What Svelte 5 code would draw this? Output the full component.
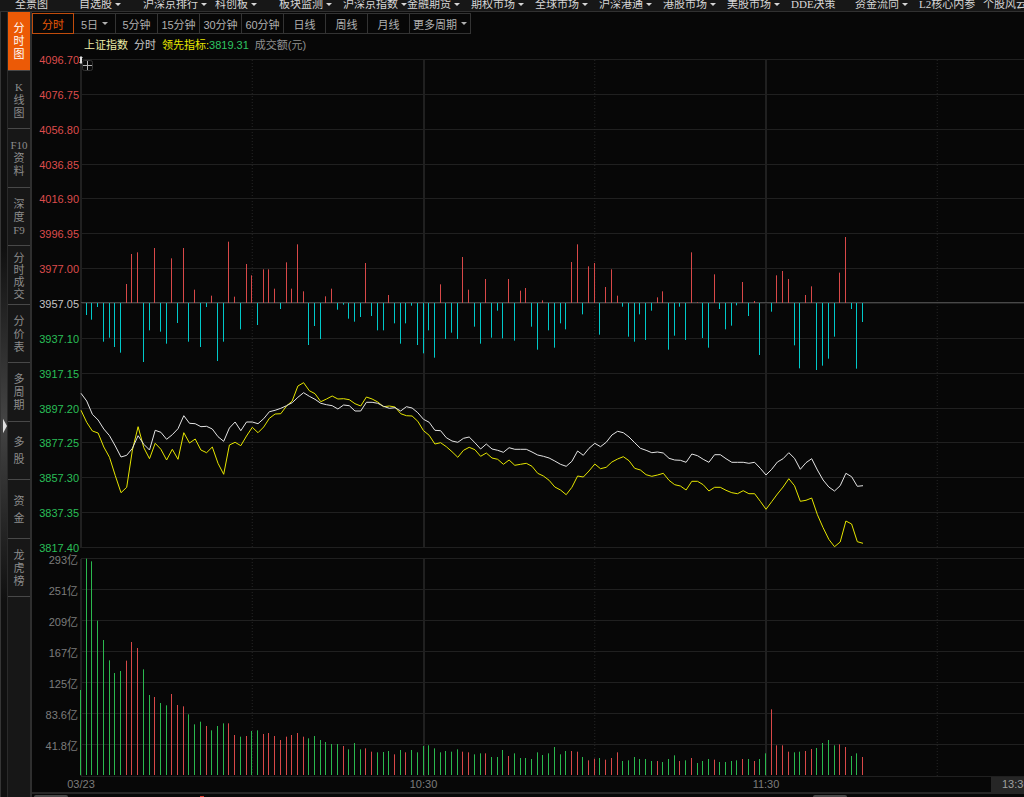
<script>
  const menu = [
    { label: '全景图' },
    { label: '自选股', more: true },
    { label: '沪深京排行', more: true, wide: true },
    { label: '科创板', more: true },
    { label: '板块监测', more: true },
    { label: '沪深京指数', more: true },
    { label: '金融期货', more: true },
    { label: '期权市场', more: true },
    { label: '全球市场', more: true },
    { label: '沪深港通', more: true },
    { label: '港股市场', more: true },
    { label: '美股市场', more: true },
    { label: 'DDE决策' },
    { label: '资金流向', more: true },
    { label: 'L2核心内参' },
    { label: '个股风云' }
  ];

  const views = [
    ['分', '时', '图'],
    ['K', '线', '图'],
    ['F10', '资', '料'],
    ['深', '度', 'F9'],
    ['分', '时', '成', '交'],
    ['分', '价', '表'],
    ['多', '周', '期'],
    ['多', '股'],
    ['资', '金'],
    ['龙', '虎', '榜']
  ];

  const periods = [
    { label: '分时' },
    { label: '5日', more: true },
    { label: '5分钟' },
    { label: '15分钟' },
    { label: '30分钟' },
    { label: '60分钟' },
    { label: '日线' },
    { label: '周线' },
    { label: '月线' },
    { label: '更多周期', more: true, wide: true }
  ];

  let activeView = $state(0);
  let activePeriod = $state(0);

  const prices = [
    '4096.70', '4076.75', '4056.80', '4036.85', '4016.90', '3996.95', '3977.00', '3957.05',
    '3937.10', '3917.15', '3897.20', '3877.25', '3857.30', '3837.35', '3817.40'
  ];
  const volumes = ['293亿', '251亿', '209亿', '167亿', '125亿', '83.6亿', '41.8亿'];

  // One value per minute, in thirds of a pixel below DATA_TOP
  const indexLine = [
    490, 513, 553, 570, 597, 617, 648, 681, 676, 655, 617, 643, 660, 601, 607, 628, 614, 596, 557, 580,
    581, 590, 589, 597, 620, 634, 594, 576, 602, 576, 576, 581, 566, 545, 541, 535, 527, 518, 502, 488,
    499, 508, 520, 524, 527, 537, 525, 527, 543, 543, 517, 517, 520, 529, 535, 533, 543, 530, 534, 548,
    568, 577, 601, 602, 623, 633, 637, 625, 621, 638, 657, 642, 657, 661, 667, 653, 658, 658, 658, 666,
    675, 679, 684, 693, 703, 709, 694, 663, 676, 655, 640, 650, 637, 615, 604, 608, 621, 638, 655, 661,
    668, 666, 669, 685, 690, 691, 697, 672, 677, 688, 697, 674, 674, 686, 697, 697, 697, 700, 697, 715,
    735, 718, 696, 686, 668, 685, 718, 698, 686, 720, 750, 771, 783, 767, 730, 740, 769, 767
  ];
  const leadLine = [
    541, 577, 603, 609, 651, 682, 737, 788, 772, 660, 590, 653, 686, 640, 658, 690, 658, 688, 608, 639,
    627, 660, 668, 651, 700, 733, 645, 637, 647, 618, 592, 608, 591, 565, 552, 551, 528, 513, 468, 458,
    482, 491, 515, 507, 498, 507, 506, 509, 521, 528, 501, 507, 516, 530, 528, 531, 551, 557, 558, 574,
    602, 616, 642, 638, 650, 665, 682, 661, 652, 659, 679, 669, 684, 688, 703, 690, 706, 703, 700, 709,
    730, 738, 751, 771, 780, 794, 772, 738, 741, 723, 702, 716, 712, 696, 687, 680, 692, 715, 720, 734,
    739, 735, 730, 751, 764, 768, 780, 754, 754, 764, 783, 772, 772, 781, 788, 791, 782, 791, 791, 814,
    838, 815, 792, 771, 746, 767, 814, 811, 804, 854, 893, 928, 950, 936, 873, 882, 935, 940
  ];
  const strength = [
    219, 255, 269, 231, 335, 323, 351, 368, 162, 72, 67, 396, 301, 54, 305, 341, 85, 279, 54, 335,
    179, 351, 231, 197, 393, 335, 35, 200, 298, 102, 136, 285, 118, 118, 176, 237, 97, 176, 43, 184,
    345, 288, 327, 199, 176, 239, 224, 266, 275, 261, 99, 258, 301, 301, 195, 280, 341, 280, 227, 345,
    370, 301, 383, 163, 327, 308, 327, 81, 179, 290, 341, 147, 323, 242, 325, 147, 332, 182, 174, 290,
    359, 211, 301, 353, 280, 298, 96, 43, 253, 109, 99, 314, 171, 118, 197, 230, 320, 335, 253, 330,
    242, 202, 184, 359, 317, 230, 330, 67, 217, 324, 353, 133, 237, 298, 287, 226, 156, 258, 213, 375,
    219, 245, 136, 123, 147, 346, 415, 195, 169, 420, 407, 386, 320, 128, 21, 237, 416, 276
  ];
  // Bar heights in thirds of a pixel, negative for a falling minute
  const turnover = [
    -255, -649, -641, -463, -405, -344, -306, -312, 343, 399, 381, -317, -240, 234, -216, -209, 243, 210,
    206, -182, -152, -160, 147, -134, -147, -155, 155, 120, -115, 117, -132, -134, 123, 126, 117, 105,
    115, 120, 126, 115, -110, -117, -105, -99, -93, -93, 87, -77, -96, -77, 80, 70, -68, -69, -72, 62,
    -75, 68, -75, -68, -87, -89, -80, -68, -72, -70, -77, 70, 68, -62, -65, 65, -54, -54, -75, 57, -65,
    -51, -51, -48, -68, -60, -65, -84, -62, -72, 72, 70, -54, 44, 49, -51, 46, 51, 68, -42, -44, -54,
    -48, -48, -42, 42, -39, -48, -59, 42, -44, 51, -36, -42, -48, 46, -39, -39, -42, -44, 48, -48, 42,
    -48, -65, 197, 89, 89, 70, -68, -70, 72, 78, -81, -96, -105, -89, 92, 84, -57, -65, 54
  ];

  const LEFT = 49;
  const HOUR = 342.5;
  const PRICE_TOP = 6;
  const PRICE_BOTTOM = 494;
  const VOLUME_TOP = 505;
  const VOLUME_BOTTOM = 722;
  const DATA_TOP = 176;
  const ZERO = 249;

  const x = (minute) => LEFT + (minute * HOUR) / 60;
  const y = (value) => DATA_TOP + value / 3;
  const barX = (minute) => Math.floor(x(minute) - 0.5);
  const priceY = (i) => Math.round(PRICE_TOP + (i * (PRICE_BOTTOM - PRICE_TOP)) / 14);
  const volumeY = (i) => VOLUME_TOP + i * 31;
  const points = (line) => line.map((v, i) => `${x(i).toFixed(1)},${y(v).toFixed(1)}`).join(' ');
  const priceTone = (i) => (i < 7 ? 'rise' : i > 7 ? 'fall' : 'flat');
</script>

<div class="app">
  <nav class="menu">
    {#each menu as item}
      <a href="#menu" class:wide={item.wide}>
        {item.label}
        {#if item.more}<i class="arrow"></i>{/if}
      </a>
    {/each}
  </nav>

  <div class="body">
    <button class="grip" aria-label="展开">
      <svg width="5" height="18" viewBox="0 0 5 18"><path d="M0 0 5 9 0 18Z" fill="#e0e0e0" /></svg>
    </button>

    <aside>
      <div class="views">
        {#each views as parts, i}
          <button
            class:active={activeView === i}
            class:tight={parts.length === 4}
            class:loose={parts.length === 2}
            onclick={() => (activeView = i)}
          >
            {#each parts as part}<span>{part}</span>{/each}
          </button>
        {/each}
      </div>
    </aside>

    <main>
      <div class="periods">
        {#each periods as period, i}
          <button
            class:active={activePeriod === i}
            class:wide={period.wide}
            onclick={() => (activePeriod = i)}
          >
            {period.label}
            {#if period.more}<i class="arrow"></i>{/if}
          </button>
        {/each}
      </div>

      <div class="legend">
        <span class="name">上证指数</span>
        <span class="mode">分时</span>
        <span class="lead">领先指标:<b>3819.31</b></span>
        <span class="amount">成交额(元)</span>
      </div>

      <svg class="chart" width="100%" height="738" role="img" aria-label="上证指数分时">
        <g class="grid">
          {#each prices as _, i}
            <rect x={LEFT} y={priceY(i) - 1} width="100%" height="1" />
          {/each}
          {#each volumes as _, i}
            <rect x={LEFT} y={volumeY(i) - 1} width="100%" height="1" />
          {/each}
          <rect x={LEFT} y={VOLUME_BOTTOM} width="100%" height="1" />

          {#each [0, 1, 2] as hour}
            <rect x={barX(hour * 60)} y={PRICE_TOP} width="2" height={PRICE_BOTTOM - PRICE_TOP} />
            <rect x={barX(hour * 60)} y={VOLUME_TOP} width="2" height={VOLUME_BOTTOM - VOLUME_TOP} />
          {/each}
        </g>
        <g class="half">
          {#each [30, 90, 150] as minute}
            <line x1={x(minute)} x2={x(minute)} y1={PRICE_TOP} y2={PRICE_BOTTOM} />
            <line x1={x(minute)} x2={x(minute)} y1={VOLUME_TOP} y2={VOLUME_BOTTOM} />
          {/each}
        </g>
        <rect class="zero" x={LEFT} y={ZERO - 1} width="100%" height="1" />

        {#each strength as value, i}
          <rect
            class={value < 219 ? 'up' : 'down'}
            x={barX(i)}
            y={Math.min(ZERO, y(value))}
            width="1"
            height={Math.abs(y(value) - ZERO)}
          />
        {/each}

        {#each turnover as value, i}
          <rect
            class={value > 0 ? 'up' : 'sell'}
            x={barX(i)}
            y={VOLUME_BOTTOM - 1 - Math.abs(value) / 3}
            width="1"
            height={Math.abs(value) / 3}
          />
        {/each}

        <polyline class="lead-line" points={points(leadLine)} />
        <polyline class="index-line" points={points(indexLine)} />

        {#each prices as price, i}
          <text class={priceTone(i)} x="47" y={priceY(i) + 4} text-anchor="end">{price}</text>
        {/each}
        {#each volumes as volume, i}
          <text class="muted" x="46" y={volumeY(i) + 5} text-anchor="end">{volume}</text>
        {/each}

        <path class="handle" d="M49 2 51 4H50V8H51L49 10 47 8H48V4H47Z" />
        <rect class="plus-box" x="50.5" y="6.5" width="10" height="10" rx="2" />
        <path class="plus" d="M51 11.5H60M55.5 7V16" />

        <text class="muted" x={x(0)} y="734" text-anchor="middle">03/23</text>
        <text class="muted" x={x(60)} y="734" text-anchor="middle">10:30</text>
        <text class="muted" x={x(120)} y="734" text-anchor="middle">11:30</text>
        <rect class="cursor" x="959" y="723" width="48" height="15" />
        <text class="cursor-time" x="970" y="734">13:30</text>
      </svg>

      <footer>
        <i class="thumb"></i>
        <i class="dot"></i>
        <i class="thumb"></i>
      </footer>
    </main>
  </div>
</div>

<style>
  :global(body) {
    background: #070707;
  }

  .app {
    display: flex;
    flex-direction: column;
    min-height: 100vh;
    overflow: hidden;
    background: #070707;
    color: #b0b0b0;
    font-family: 'Liberation Sans', 'Noto Sans CJK SC', sans-serif;
    font-size: 11px;
  }

  button {
    padding: 0;
    border: 0;
    background: none;
    color: inherit;
    font: inherit;
    cursor: pointer;
  }

  .arrow {
    flex: none;
    border: 3px solid transparent;
    border-top-color: currentColor;
    border-bottom: 0;
  }

  .menu {
    display: flex;
    height: 11px;
    padding-left: 15px;
    border-bottom: 1px solid #303030;
    background: #171717;
    font-family: 'Liberation Serif', 'Noto Sans CJK SC', serif;
  }

  .menu a {
    display: flex;
    flex: 0 0 64px;
    align-items: center;
    gap: 3px;
    height: 9px;
    color: #d6d6d6;
    line-height: 9px;
    text-decoration: none;
    white-space: nowrap;
  }

  .menu a.wide {
    flex-basis: 72px;
  }

  .body {
    display: flex;
    flex: 1;
  }

  .grip {
    display: flex;
    flex: none;
    align-items: center;
    width: 8px;
    padding-left: 2px;
    border-left: 1px solid #353535;
    border-right: 1px solid #2a2a2a;
    background: linear-gradient(#101010 30%, #444 52%, #101010 75%);
  }

  .grip svg {
    margin-bottom: -42px;
  }

  aside {
    flex: none;
    width: 22px;
    border-right: 2px solid #2f2f2f;
    background: #171717;
  }

  .views {
    display: flex;
    flex-direction: column;
    height: 585px;
    font-family: 'Liberation Serif', 'Noto Sans CJK SC', serif;
  }

  .views button {
    display: flex;
    flex: 1;
    flex-direction: column;
    align-items: center;
    justify-content: center;
    padding-top: 2px;
    border-bottom: 1px solid #484848;
    color: #8c8c8c;
    line-height: 13px;
  }

  .views .tight {
    line-height: 12px;
  }

  .views .loose {
    line-height: 17px;
  }

  .views .active {
    background: #ec5a06;
    color: #fff;
  }

  main {
    display: flex;
    flex: 1;
    flex-direction: column;
    min-width: 0;
  }

  .periods {
    display: flex;
    padding-top: 1px;
  }

  .periods button {
    display: flex;
    flex: 0 0 42px;
    align-items: center;
    justify-content: center;
    gap: 4px;
    box-sizing: border-box;
    height: 21px;
    border: 1px solid #333;
    border-left-width: 0;
    white-space: nowrap;
  }

  .periods button.wide {
    flex-basis: 61px;
  }

  .periods button.active {
    border: 1px solid #c04c0c;
    color: #ec5a06;
  }

  .legend {
    display: flex;
    gap: 6px;
    padding: 3px 0 0 52px;
    line-height: 17px;
    white-space: nowrap;
  }

  .name {
    color: #ececa8;
  }

  .mode {
    color: #c8c8c8;
  }

  .lead {
    color: #e8e800;
  }

  .lead b {
    color: #2fc463;
    font-weight: 400;
  }

  .amount {
    color: #909090;
  }

  .chart {
    display: block;
  }

  .grid {
    fill: #202020;
  }

  .half {
    stroke: #262626;
    stroke-dasharray: 1 2;
  }

  .zero {
    fill: #484848;
  }

  .up {
    fill: #d84848;
  }

  .down {
    fill: #00c8c8;
  }

  .sell {
    fill: #2ab84e;
  }

  .lead-line,
  .index-line {
    fill: none;
    stroke: #e6e600;
    stroke-width: 1;
  }

  .index-line {
    stroke: #e4e4e4;
  }

  .rise {
    fill: #dc4c4c;
  }

  .fall {
    fill: #2abf57;
  }

  .flat {
    fill: #c4c4c4;
  }

  .muted {
    fill: #7c7c7c;
  }

  .handle {
    fill: #e0e0e0;
  }

  .plus-box {
    fill: #0a0a0a;
    stroke: #333;
  }

  .plus {
    stroke: #b4b4b4;
  }

  .cursor {
    fill: #262626;
  }

  .cursor-time {
    fill: #a0a0a0;
  }

  footer {
    display: flex;
    flex: 1;
    align-items: flex-end;
    min-height: 3px;
    border-top: 2px solid #262626;
  }

  .thumb {
    width: 34px;
    height: 2px;
    margin-left: 2px;
    border-radius: 2px 2px 0 0;
    background: #4a4a4a;
  }

  .dot {
    width: 4px;
    height: 1px;
    margin: 0 607px 0 132px;
    background: #d83a2c;
  }
</style>
